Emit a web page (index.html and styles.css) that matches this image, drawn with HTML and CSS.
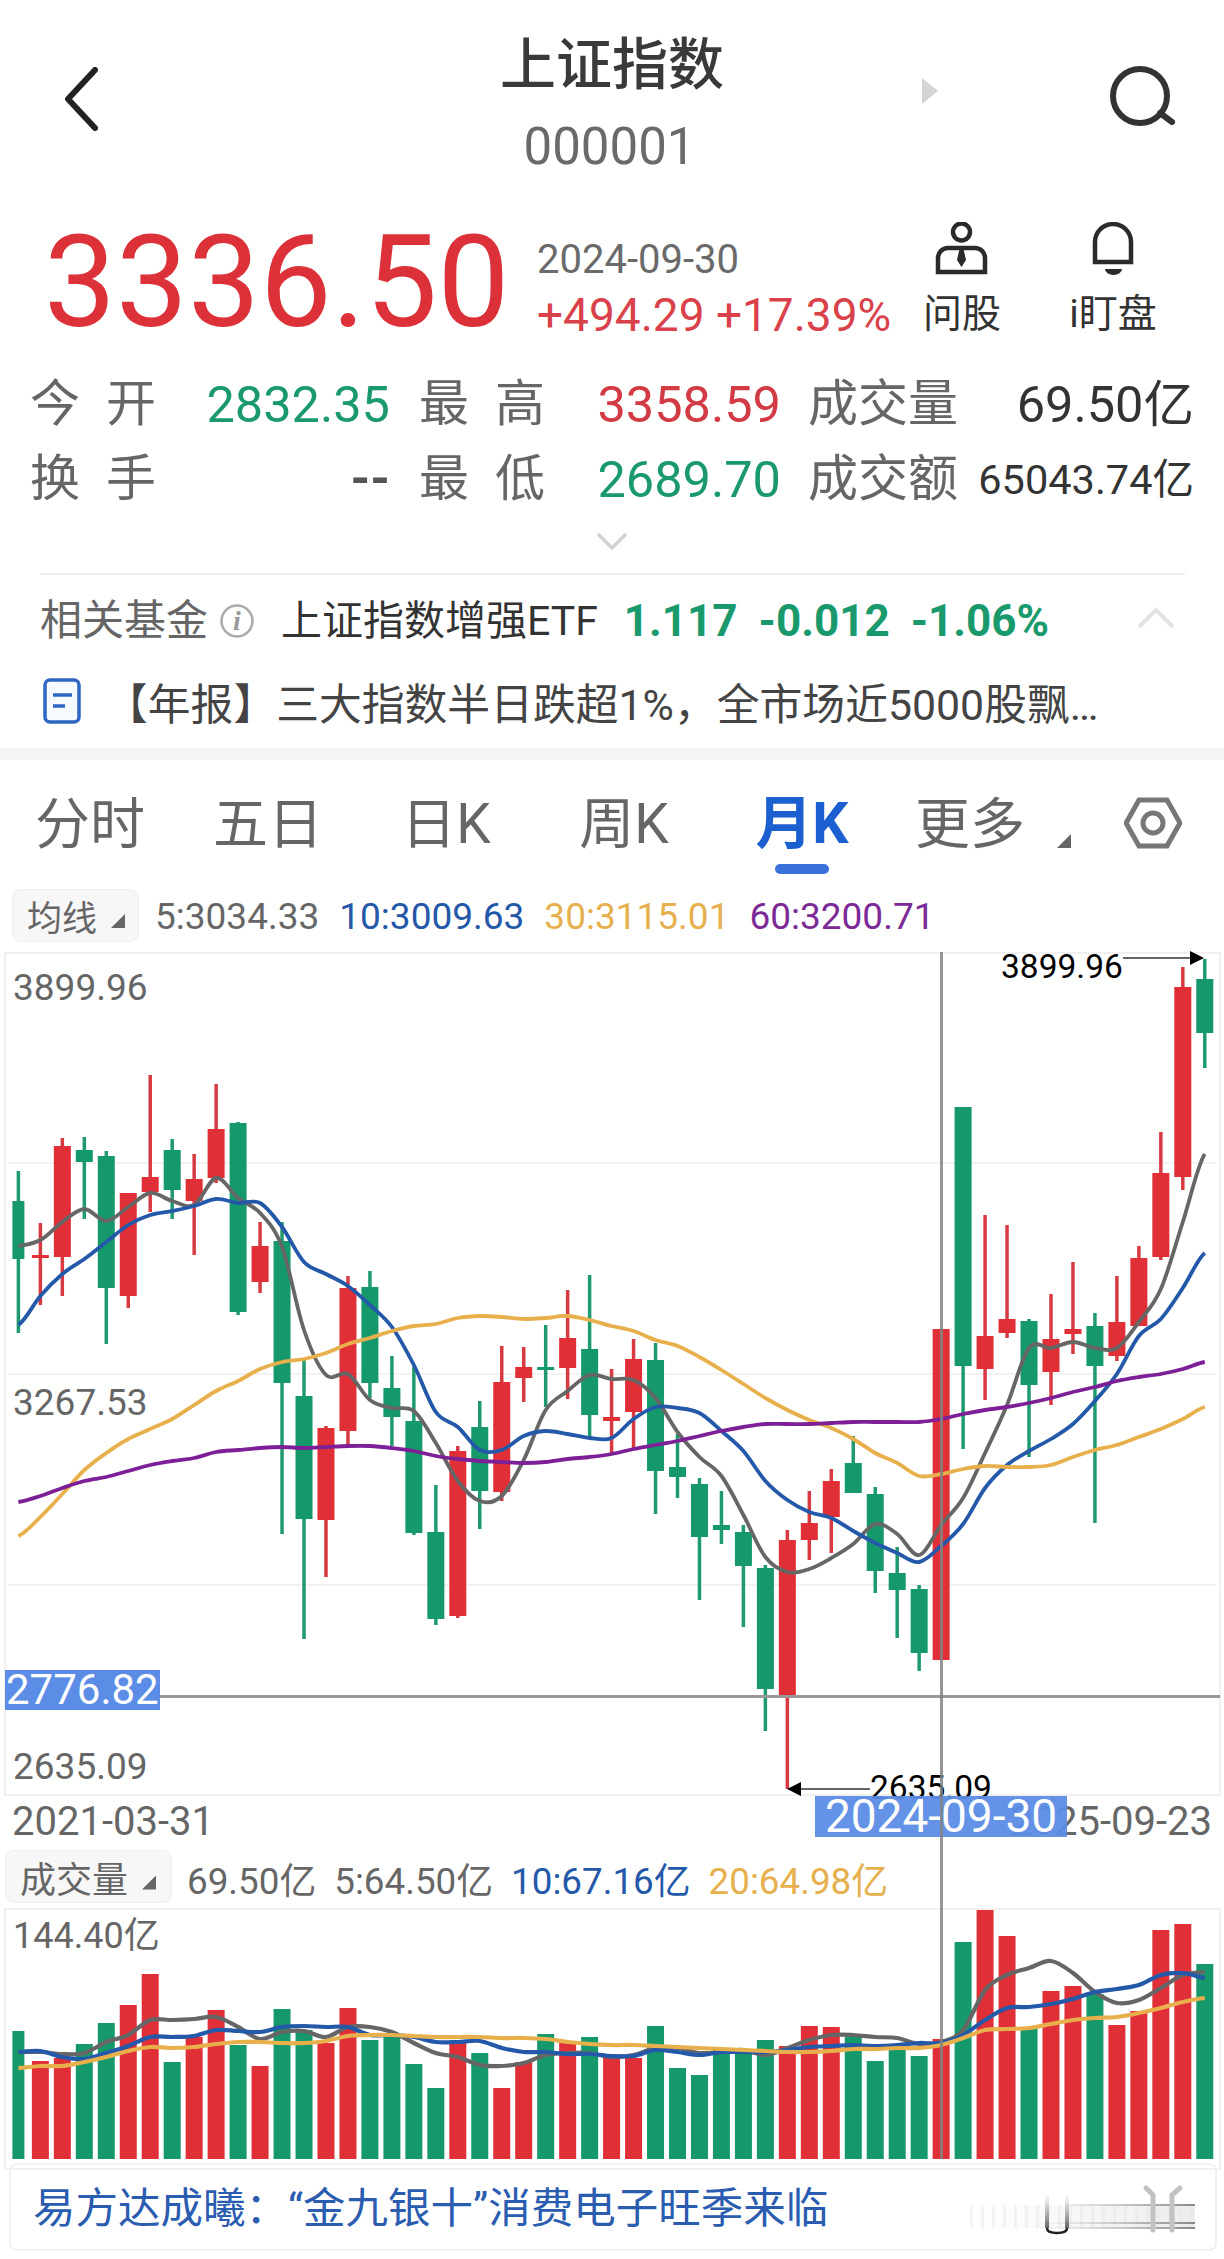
FILE: index.html
```html
<!DOCTYPE html>
<html lang="zh">
<head>
<meta charset="utf-8">
<title>上证指数</title>
<link rel="stylesheet" href="styles.css">
</head>
<body>
<div class="page">

	<div class="header">
		<svg class="back" width="34" height="64" viewBox="0 0 34 64"><path d="M31 3 L4 32 L31 61" /></svg>
		<div class="title">
			<div class="name">上证指数</div>
			<div class="code">000001</div>
		</div>
		<div class="header-right">
			<svg class="next" width="16" height="26" viewBox="0 0 16 26"><path d="M0 0 L16 13 L0 26 Z" /></svg>
			<svg class="search" width="68" height="60" viewBox="0 0 68 60"><circle cx="32" cy="30" r="27" /><path d="M52 47 L64 56" /></svg>
		</div>
	</div>

	<div class="quote">
		<div class="price">3336.50</div>
		<div class="meta">
			<div class="date">2024-09-30</div>
			<div class="change">+494.29 +17.39%</div>
		</div>
		<div class="action act-ask">
			<svg width="54" height="54" viewBox="0 0 54 54">
				<circle cx="26.5" cy="10" r="8.5" class="line" />
				<path d="M3 50 V36 a10 10 0 0 1 10 -10 H40 a10 10 0 0 1 10 10 V50 Z" class="line" />
				<path d="M24.5 27 H28.5 L31 38 L26.5 45 L22 38 Z" class="fill" />
			</svg>
			<span>问股</span>
		</div>
		<div class="action act-watch">
			<svg width="44" height="54" viewBox="0 0 44 54">
				<path d="M4 40 V20 a18 18 0 0 1 36 0 V40 Z" class="line" />
				<path d="M14 47 H31 a8.5 6 0 0 1 -17 0 Z" class="fill" />
			</svg>
			<span>i盯盘</span>
		</div>
	</div>

	<div class="stats">
		<div class="lab"><span>今</span><span>开</span></div>
		<div class="val green">2832.35</div>
		<div class="lab lab-mid"><span>最</span><span>高</span></div>
		<div class="val red">3358.59</div>
		<div class="lab lab-end">成交量</div>
		<div class="val dark">69.50亿</div>

		<div class="lab"><span>换</span><span>手</span></div>
		<div class="val none">--</div>
		<div class="lab lab-mid"><span>最</span><span>低</span></div>
		<div class="val green">2689.70</div>
		<div class="lab lab-end">成交额</div>
		<div class="val dark small">65043.74亿</div>
	</div>

	<div class="expand">
		<svg width="32" height="18" viewBox="0 0 32 18"><path d="M2 2 L16 16 L30 2" /></svg>
	</div>

	<div class="fund">
		<span class="fund-label">相关基金</span>
		<svg class="info" width="36" height="36" viewBox="0 0 36 36"><circle cx="18" cy="18" r="15.5" /><text x="18" y="27" text-anchor="middle">i</text></svg>
		<span class="fund-name">上证指数增强ETF</span>
		<span class="fund-num">1.117</span>
		<span class="fund-num">-0.012</span>
		<span class="fund-num">-1.06%</span>
		<svg class="fund-up" width="38" height="22" viewBox="0 0 38 22"><path d="M2 20 L19 3 L36 20" /></svg>
	</div>

	<div class="news">
		<svg width="38" height="46" viewBox="0 0 38 46"><rect x="2" y="2" width="34" height="42" rx="5" /><path d="M10 17 H29 M10 28 H22" /></svg>
		<span>【年报】三大指数半日跌超1%，全市场近5000股飘…</span>
	</div>

	<div class="band"></div>

	<div class="tabs">
		<div class="tab">分时</div>
		<div class="tab">五日</div>
		<div class="tab">日K</div>
		<div class="tab">周K</div>
		<div class="tab active">月K</div>
		<div class="tab tab-more">更多<i class="corner"></i></div>
		<svg class="hex" width="58" height="52" viewBox="0 0 58 52"><path d="M15 3 H43 L56 26 L43 49 H15 L2 26 Z" /><circle cx="29" cy="26" r="10" /></svg>
	</div>

	<div class="ma-row">
		<div class="pick">均线<i class="corner small"></i></div>
		<span class="c-gray">5:3034.33</span>
		<span class="c-blue">10:3009.63</span>
		<span class="c-yellow">30:3115.01</span>
		<span class="c-purple">60:3200.71</span>
	</div>

	<svg id="kline" class="panel" width="1224" height="844" viewBox="0 952 1224 844"></svg>

	<div class="dates">
		<span>2021-03-31</span>
		<span>2025-09-23</span>
		<span class="date-hi">2024-09-30</span>
	</div>

	<div class="ma-row vol-row">
		<div class="pick pick-vol">成交量<i class="corner small"></i></div>
		<span class="c-gray">69.50亿</span>
		<span class="c-gray">5:64.50亿</span>
		<span class="c-blue">10:67.16亿</span>
		<span class="c-yellow">20:64.98亿</span>
	</div>

	<svg id="volume" class="panel" width="1224" height="251" viewBox="0 1908 1224 251"></svg>

	<div class="banner">
		<span class="banner-text">易方达成曦：“金九银十”消费电子旺季来临</span>
		<svg class="smudge" width="230" height="62" viewBox="0 0 230 62">
			<defs>
				<linearGradient id="fade" x1="0" x2="1" y1="0" y2="0">
					<stop offset="0" stop-color="#f0f0f0" stop-opacity="0" />
					<stop offset="1" stop-color="#ececec" />
				</linearGradient>
				<linearGradient id="rule" x1="0" x2="1" y1="0" y2="0">
					<stop offset="0" stop-color="#bbb" stop-opacity="0" />
					<stop offset="1" stop-color="#888" />
				</linearGradient>
				<linearGradient id="rise" gradientUnits="userSpaceOnUse" x1="0" x2="0" y1="15" y2="55">
					<stop offset="0" stop-color="#999" stop-opacity="0" />
					<stop offset="1" stop-color="#444" />
				</linearGradient>
				<pattern id="ticks" width="11" height="23" patternUnits="userSpaceOnUse">
					<rect width="3" height="23" fill="#e6e6e6" />
				</pattern>
			</defs>
			<rect x="0" y="27" width="225" height="23" fill="url(#fade)" />
			<rect x="0" y="27" width="225" height="23" fill="url(#ticks)" opacity="0.45" />
			<path d="M100 27 H225 M60 45 H225 M60 50 H225" fill="none" stroke="url(#rule)" stroke-width="2" />
			<path d="M77 15 V50 M97 15 V50" fill="none" stroke="url(#rise)" stroke-width="4" />
			<path d="M77 50 Q77 55 87 55 Q97 55 97 50" fill="none" stroke="#222" stroke-width="2.5" />
			<path d="M176 10 L183 17 V52 M210 10 L202 17 V52" fill="none" stroke="#c2c2c2" stroke-width="5" stroke-linecap="round" />
		</svg>
	</div>

	<div class="crosshair"></div>
</div>
<script src="chart.js"></script>
</body>
</html>
```
FILE: styles.css
```css
* {box-sizing: border-box;}
html, body {margin: 0; padding: 0; background: #fff;}
body {font-family: Roboto, "Noto Sans CJK SC", sans-serif; color: #333;}

.page {position: relative; width: 1224px; height: 2259px; overflow: hidden;}

/* Header */
.header {display: grid; grid-template-columns: 1fr auto 1fr; height: 222px; padding-top: 37px;}
.back {margin: 30px 0 0 64px;}
.back path {fill: none; stroke: #222; stroke-width: 6; stroke-linecap: round; stroke-linejoin: round;}
.name {font-size: 56px; line-height: 56px; font-weight: 500; color: #3a3a3a; text-align: center;}
.code {font-size: 51px; line-height: 50px; color: #6a6a6a; text-align: center; margin: 29px 0 0 -5px;}
.header-right {display: flex; align-items: flex-start; justify-content: flex-end; padding-right: 48px;}
.next {margin: 41px 170px 0 0;}
.next path {fill: #d4d4d4;}
.search {margin-top: 29px;}
.search circle, .search path {fill: none; stroke: #333; stroke-width: 6; stroke-linecap: round;}

/* Quote */
.quote {display: flex; align-items: flex-start; height: 145px;}
.price {width: 537px; padding-left: 44px; font-size: 128px; line-height: 120px; color: #dc3138; white-space: nowrap;}
.meta {width: 380px;}
.date {font-size: 40px; line-height: 40px; color: #6a6a6a; margin-top: 18px;}
.change {font-size: 46px; line-height: 40px; color: #d9424a; margin-top: 15px; white-space: nowrap;}
.action {display: flex; flex-direction: column; align-items: center; font-size: 39px; line-height: 40px; color: #333;}
.action span {margin-top: 18px; white-space: nowrap;}
.action .line {fill: none; stroke: #2b2b2b; stroke-width: 4.5;}
.action .fill {fill: #2b2b2b;}
.act-ask {width: 80px; margin: 0 0 0 5px;}
.act-watch {width: 90px; margin-left: 66px;}

/* Stats */
.stats {display: grid; grid-template-columns: 126px 234px 155px 236px 177px 236px; grid-auto-rows: 75px; align-items: center; padding-left: 30px;}
.lab {font-size: 50px; line-height: 75px; color: #666; display: flex; justify-content: space-between; white-space: nowrap;}
.lab-mid {padding-left: 29px;}
.lab-end {padding-left: 27px;}
.val {font-size: 50.5px; line-height: 75px; text-align: right; white-space: nowrap;}
.green {color: #1a9a6c;}
.red {color: #d23b44;}
.dark {color: #333;}
.small {font-size: 41.5px;}
.none {font-weight: 700; color: #555; font-size: 50px;}

.expand {height: 56px; text-align: center; padding-top: 15px;}
.expand svg {display: block; margin: 0 auto;}
.expand path, .fund-up path {fill: none; stroke: #d2d2d2; stroke-width: 3.5;}

/* Fund and news */
.fund {display: flex; align-items: center; height: 94px; margin: 0 39px 0 40px; border-top: 2px solid #efefef; font-size: 42px;}
.fund-label {color: #666; line-height: 42px;}
.info {margin: 0 26px 0 11px;}
.info circle {fill: none; stroke: #aaa; stroke-width: 2.5;}
.info text {font-family: "Liberation Serif", serif; font-style: italic; font-weight: 700; font-size: 28px; fill: #999;}
.fund-name {color: #333; font-size: 41px; margin-right: 26px; line-height: 42px;}
.fund-num {color: #1a9a6c; font-weight: 700; font-size: 44px; margin-right: 21px;}
.fund-up {margin: 0 10px 6px auto;}
.fund-up path {stroke: #e2e2e2; stroke-width: 4;}

.news {display: flex; align-items: center; height: 68px; padding-left: 43px; font-size: 42.8px; color: #444; white-space: nowrap;}
.news svg {margin-right: 38px;}
.news rect {fill: #f6faff; stroke: #2f66c4; stroke-width: 3.5;}
.news path {fill: none; stroke: #2f66c4; stroke-width: 3.5;}
.news > span {margin-left: -14px;}

.band {height: 12px; margin-top: 13px; background: #f5f5f5;}

/* Tabs */
.tabs {display: grid; grid-template-columns: repeat(6, 178px) 1fr; height: 120px; padding: 36px 0 0 1px; align-items: start;}
.tab {font-size: 55px; line-height: 56px; color: #666; text-align: center; position: relative; white-space: nowrap;}
.tab.active {font-size: 57px; color: #1c5fd0; font-weight: 700;}
.tab.active::after {content: ""; display: block; width: 54px; height: 10px; margin: 12px auto 0; border-radius: 5px; background: #3a70d9;}
.tab-more {display: flex; align-items: flex-end; padding-left: 24px;}
.corner {display: inline-block; flex: none; width: 14px; height: 14px; margin: 0 0 4px 32px; background: #666; clip-path: polygon(100% 0, 100% 100%, 0 100%);}
.corner.small {margin: 0 0 0 14px;}
.hex {margin: 1px 0 0 55px;}
.hex path, .hex circle {fill: none; stroke: #777; stroke-width: 5;}

/* Indicator rows */
.ma-row {display: flex; align-items: center; gap: 20px; height: 72px; padding: 0 0 0 12px; font-size: 37px; white-space: nowrap;}
.pick {display: flex; align-items: center; width: 127px; height: 53px; margin: -2px -4px 0 0; padding-left: 14px; font-size: 35px; color: #666; background: #f7f7f7; border: 1px solid #eee; border-radius: 9px;}
.pick .corner {margin-top: 12px;}
.vol-row {height: 61px; padding-left: 5px; font-size: 36.8px; gap: 18px;}
.pick-vol {width: 167px; font-size: 36px; margin-right: -3px;}
.c-gray {color: #666;}
.c-blue {color: #2458a8;}
.c-yellow {color: #e6b04e;}
.c-purple {color: #7b2a96;}

/* Charts */
.panel {display: block; overflow: visible;}
.panel .frame {fill: none; stroke: #f0f0f0; stroke-width: 2;}
.panel .grid {stroke: #f2f2f2; stroke-width: 2;}
.panel .axis {font-size: 37px; fill: #666;}
.panel .axis.sm {font-size: 36px;}
.panel .callout {font-size: 33.5px; fill: #000;}
.panel .hi-box {fill: #5b8ce6;}
.panel .hi-text {font-size: 42px; fill: #fff;}
.panel .cross {stroke: #999; stroke-width: 3;}
.panel .leader {stroke: #666; stroke-width: 2;}
.panel .head {fill: #000;}
.panel .up {fill: #e02f36;}
.panel .down {fill: #15996a;}
.panel .wick-up {stroke: #d83a42; stroke-width: 3.5;}
.panel .wick-down {stroke: #1f9a6e; stroke-width: 3.5;}
.panel .ma {fill: none; stroke-width: 3.8; stroke-linejoin: round;}
.panel .ma.vol {stroke-width: 4.2;}
.panel .m-gray {stroke: #666;}
.panel .m-blue {stroke: #2458a8;}
.panel .m-yellow {stroke: #e8b04c;}
.panel .m-purple {stroke: #7d1f96;}

.dates {position: relative; display: flex; justify-content: space-between; align-items: center; height: 51px; padding: 0 12px 0 12px; font-size: 40px; color: #666;}
.date-hi {position: absolute; left: 815px; top: 0; width: 252px; height: 41px; line-height: 41px; text-align: center; font-size: 46px; color: #fff; background: rgba(91, 140, 230, 0.95);}

/* Bottom banner */
.banner {display: flex; align-items: center; justify-content: space-between; height: 88px; margin: 4px 7px 0 9px; padding: 0 15px 0 22px; border: 2px solid #f1f1f1; border-radius: 8px; font-size: 42.5px; color: #2a5cb0; white-space: nowrap;}
.banner-text {margin-bottom: 5px;}
.smudge {margin-top: 4px;}

.crosshair {position: absolute; left: 940px; top: 952px; width: 3px; height: 1207px; background: rgba(130, 130, 130, 0.85);}
```
FILE: chart.js
```js
// Monthly candles: [wick top, body top, body bottom, wick bottom, 1 = up]
var candles = [
	[1171,1201,1259,1333,0],[1223,1255,1258,1305,1],[1138,1146,1257,1296,1],[1137,1150,1162,1219,0],
	[1151,1156,1288,1344,0],[1193,1193,1296,1308,1],[1075,1177,1192,1212,1],[1139,1150,1190,1219,0],
	[1154,1179,1201,1255,1],[1084,1129,1178,1183,1],[1122,1123,1312,1315,0],[1222,1246,1282,1293,1],
	[1222,1241,1383,1534,0],[1360,1396,1519,1639,0],[1426,1428,1520,1577,1],[1276,1288,1431,1444,1],
	[1271,1287,1383,1398,0],[1356,1388,1417,1446,0],[1367,1421,1533,1535,0],[1485,1532,1619,1625,0],
	[1446,1451,1616,1618,1],[1401,1427,1491,1529,0],[1346,1382,1492,1501,1],[1347,1367,1378,1402,1],
	[1325,1367,1370,1407,0],[1290,1338,1368,1399,1],[1275,1349,1415,1438,0],[1369,1417,1421,1453,1],
	[1339,1359,1412,1448,1],[1343,1360,1471,1514,0],[1434,1467,1477,1498,0],[1478,1484,1537,1600,0],
	[1491,1525,1530,1544,0],[1525,1532,1566,1627,0],[1565,1568,1689,1731,0],[1530,1540,1697,1789,1],
	[1491,1523,1540,1560,1],[1469,1481,1517,1553,1],[1436,1463,1493,1493,0],[1487,1494,1571,1593,0],
	[1547,1573,1590,1638,0],[1585,1589,1653,1671,0],[1329,1329,1660,1660,1],[1107,1107,1366,1449,0],
	[1215,1336,1369,1400,1],[1225,1319,1333,1338,1],[1319,1321,1385,1457,0],[1294,1339,1372,1405,1],
	[1262,1329,1334,1354,1],[1313,1326,1366,1523,0],[1276,1322,1356,1361,1],[1246,1258,1326,1326,1],
	[1132,1173,1257,1260,1],[967,987,1177,1190,1],[959,979,1033,1068,0]
];

var ma5 = [1246,1240,1222,1209,1221,1207,1193,1201,1205,1178,1198,1213,1247,1330,1375,1374,1400,1408,1411,1443,1481,1501,1496,1460,1410,1391,1375,1379,1380,1398,1432,1457,1476,1515,1557,1572,1569,1558,1544,1524,1534,1555,1525,1498,1453,1405,1348,1348,1342,1348,1348,1322,1289,1222,1154];
var ma10 = [1325,1296,1274,1259,1242,1225,1215,1211,1206,1199,1203,1203,1227,1262,1274,1286,1305,1327,1365,1412,1427,1450,1450,1436,1431,1434,1438,1438,1419,1407,1408,1413,1431,1451,1481,1500,1512,1518,1531,1543,1553,1562,1546,1524,1488,1465,1451,1439,1424,1401,1374,1336,1319,1288,1253];
var ma30 = [1536,1517,1494,1470,1453,1439,1429,1419,1405,1391,1381,1369,1362,1359,1353,1344,1338,1331,1326,1324,1318,1316,1317,1319,1318,1316,1320,1326,1331,1340,1346,1357,1370,1384,1398,1410,1420,1428,1439,1453,1463,1476,1474,1469,1466,1467,1467,1465,1457,1450,1445,1437,1429,1419,1407];
var ma60 = [1502,1496,1488,1481,1477,1471,1465,1461,1458,1452,1450,1448,1447,1448,1447,1446,1446,1448,1451,1456,1459,1461,1462,1463,1462,1459,1457,1454,1449,1445,1441,1436,1431,1427,1424,1424,1424,1423,1422,1422,1422,1422,1419,1414,1410,1407,1403,1398,1392,1387,1381,1377,1374,1369,1362];

// Volume tops, same order as the candles
var volTop = [2031,2061,2058,2044,2023,2005,1974,2062,2037,2010,2045,2066,2009,2030,2043,2008,2040,2036,2064,2088,2043,2053,2088,2062,2034,2043,2037,2055,2058,2026,2068,2075,2048,2052,2040,2046,2026,2027,2037,2061,2048,2056,2039,1942,1910,1936,2028,1991,1986,1994,2025,2011,1930,1924,1964];
var vma5 = [2052,2052,2054,2053,2042,2035,2020,2020,2019,2017,2027,2039,2032,2031,2037,2027,2027,2032,2043,2053,2057,2065,2066,2063,2055,2053,2053,2057,2055,2048,2048,2053,2052,2050,2055,2048,2040,2035,2035,2037,2038,2044,2042,2030,1990,1975,1968,1961,1973,1992,2003,2000,1988,1975,1972];
var vma10 = [2052,2051,2057,2059,2053,2046,2037,2037,2036,2030,2031,2032,2027,2026,2027,2027,2035,2035,2037,2042,2042,2041,2048,2052,2052,2054,2054,2056,2056,2050,2052,2055,2052,2052,2052,2050,2047,2046,2045,2046,2045,2043,2043,2035,2020,2008,2007,2004,1999,1992,1989,1985,1975,1973,1978];
var vma20 = [2068,2066,2066,2062,2057,2051,2047,2048,2047,2044,2042,2042,2043,2043,2041,2036,2035,2035,2036,2037,2037,2037,2038,2038,2039,2042,2044,2045,2045,2046,2047,2048,2049,2050,2051,2052,2052,2051,2049,2049,2048,2048,2045,2038,2030,2029,2028,2024,2020,2018,2017,2013,2008,2002,1998];

var SVGNS = "http://www.w3.org/2000/svg";

function cx(i) {
	return 18.4 + 21.97 * i;
}

function barWidth(i) {
	return i == 0 ? 12 : 17;
}

function add(svg, tag, attrs, text) {
	var el = document.createElementNS(SVGNS, tag);
	for (var k in attrs) {
		el.setAttribute(k, attrs[k]);
	}
	if (text) {
		el.textContent = text;
	}
	svg.appendChild(el);
	return el;
}

// Catmull-Rom through the points, as a bezier path
function smooth(ys) {
	var d = "M" + cx(0) + " " + ys[0];
	for (var i = 0; i < ys.length - 1; i++) {
		var y0 = ys[Math.max(i - 1, 0)];
		var y3 = ys[Math.min(i + 2, ys.length - 1)];
		var c1 = ys[i] + (ys[i + 1] - y0) / 6;
		var c2 = ys[i + 1] - (y3 - ys[i]) / 6;
		d += " C" + (cx(i) + 7.3) + " " + c1 + " " + (cx(i + 1) - 7.3) + " " + c2 + " " + cx(i + 1) + " " + ys[i + 1];
	}
	return d;
}

function drawLine(svg, ys, cls) {
	add(svg, "path", {d: smooth(ys), "class": cls});
}

function drawKline() {
	var svg = document.getElementById("kline");

	add(svg, "rect", {x: 5, y: 953, width: 1215, height: 842, "class": "frame"});
	[1163, 1374, 1585].forEach(function(y) {
		add(svg, "line", {x1: 8, x2: 1217, y1: y, y2: y, "class": "grid"});
	});

	candles.forEach(function(c, i) {
		var x = cx(i);
		var w = barWidth(i);
		add(svg, "line", {x1: x, x2: x, y1: c[0], y2: c[3], "class": c[4] ? "wick-up" : "wick-down"});
		add(svg, "rect", {x: x - w / 2, y: c[1], width: w, height: c[2] - c[1], "class": c[4] ? "up" : "down"});
	});

	drawLine(svg, ma5, "ma m-gray");
	drawLine(svg, ma10, "ma m-blue");
	drawLine(svg, ma30, "ma m-yellow");
	drawLine(svg, ma60, "ma m-purple");

	add(svg, "text", {x: 13, y: 1000, "class": "axis"}, "3899.96");
	add(svg, "text", {x: 13, y: 1415, "class": "axis"}, "3267.53");
	add(svg, "text", {x: 13, y: 1779, "class": "axis"}, "2635.09");

	add(svg, "line", {x1: 160, x2: 1220, y1: 1696.5, y2: 1696.5, "class": "cross"});
	add(svg, "rect", {x: 5, y: 1670, width: 155, height: 40, "class": "hi-box"});
	add(svg, "text", {x: 6, y: 1704, "class": "hi-text"}, "2776.82");

	// High and low markers
	add(svg, "text", {x: 1001, y: 978, "class": "callout"}, "3899.96");
	add(svg, "line", {x1: 1123, x2: 1192, y1: 958, y2: 958, "class": "leader"});
	add(svg, "path", {d: "M1190 951 L1204 958 L1190 965 Z", "class": "head"});

	add(svg, "line", {x1: 800, x2: 870, y1: 1789, y2: 1789, "class": "leader"});
	add(svg, "path", {d: "M801 1782 L787 1789 L801 1796 Z", "class": "head"});
	add(svg, "text", {x: 870, y: 1799, "class": "callout"}, "2635.09");
}

function drawVolume() {
	var svg = document.getElementById("volume");

	add(svg, "rect", {x: 5, y: 1909, width: 1215, height: 260, "class": "frame"});

	volTop.forEach(function(top, i) {
		var w = barWidth(i);
		add(svg, "rect", {x: cx(i) - w / 2, y: top, width: w, height: 2159 - top, "class": candles[i][4] ? "up" : "down"});
	});

	drawLine(svg, vma5, "ma vol m-gray");
	drawLine(svg, vma10, "ma vol m-blue");
	drawLine(svg, vma20, "ma vol m-yellow");

	add(svg, "text", {x: 13, y: 1948, "class": "axis sm"}, "144.40亿");
}

drawKline();
drawVolume();
```
